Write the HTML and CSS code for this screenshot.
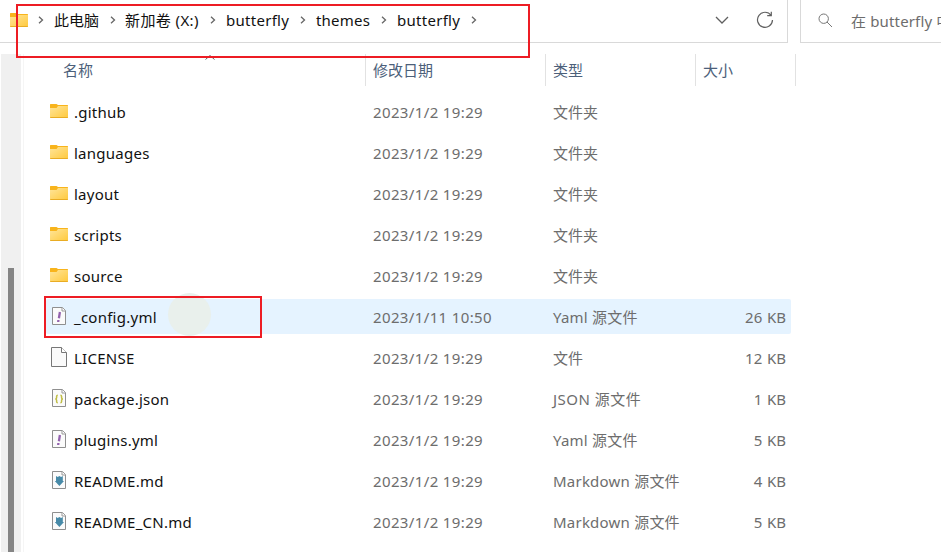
FILE: index.html
```html
<!DOCTYPE html>
<html lang="zh-CN">
<head>
<meta charset="utf-8">
<title>butterfly</title>
<link rel="stylesheet" href="styles.css">
</head>
<body>
<svg class="defs" aria-hidden="true">
  <defs>
    <linearGradient id="gold" x1="0" y1="0" x2="1" y2="1"><stop offset="0" stop-color="#ffe59a"/><stop offset="1" stop-color="#ffc93c"/></linearGradient>
    <symbol id="folder" viewBox="0 0 18 14">
      <path d="M0 .6Q0 0 .6 0H6.5L8 1H17.4Q18 1 18 1.6V6H0Z" fill="#f8b41c"/>
      <path d="M0 3.9H6.6L8 2H18V13.4Q18 14 17.4 14H.6Q0 14 0 13.4Z" fill="url(#gold)"/>
      <path d="M.3 13.5H17.7" stroke="#e9ac24"/>
    </symbol>
    <symbol id="page" viewBox="0 0 14 18">
      <path d="M.5.5H10.5L13.5 3.5V17.5H.5Z" fill="#fbfbfb" stroke="#8f8f8f"/>
      <path d="M10 .5V4H13.5" fill="#fff" stroke="#999"/>
    </symbol>
    <symbol id="yaml" viewBox="0 0 14 18">
      <use href="#page" width="14" height="18"/>
      <path d="M7.9 5L6.9 11.2M6.4 13L6.2 15" stroke="#9362ae" stroke-width="2.3"/>
    </symbol>
    <symbol id="json" viewBox="0 0 14 18">
      <use href="#page" width="14" height="18"/>
      <path d="M5.8 6.2Q4.6 6.2 4.6 7.5V8.7Q4.6 9.8 3.4 10Q4.6 10.2 4.6 11.3V12.5Q4.6 13.8 5.8 13.8M8.4 6.2Q9.6 6.2 9.6 7.5V8.7Q9.6 9.8 10.8 10Q9.6 10.2 9.6 11.3V12.5Q9.6 13.8 8.4 13.8" fill="none" stroke="#c0bd45" stroke-width="1.5"/>
    </symbol>
    <symbol id="markdown" viewBox="0 0 14 18">
      <use href="#page" width="14" height="18"/>
      <path d="M4 5L5.7 6L7.4 5L9.1 6L10.8 5V10H12L7.4 15L2.8 10H4Z" fill="#478aa8"/>
    </symbol>
    <symbol id="next" viewBox="0 0 6 8"><path d="M1 .8L4.5 4L1 7.2" fill="none" stroke="#666" stroke-width="1.3"/></symbol>
  </defs>
</svg>
<div class="explorer">
  <header class="toolbar">
    <nav class="address">
      <svg class="location"><use href="#folder"/></svg>
      <svg class="next"><use href="#next"/></svg>
      <span class="crumb computer">此电脑</span><svg class="next"><use href="#next"/></svg>
      <span class="crumb drive">新加卷 (X:)</span><svg class="next"><use href="#next"/></svg>
      <span class="crumb butterfly">butterfly</span><svg class="next"><use href="#next"/></svg>
      <span class="crumb themes">themes</span><svg class="next"><use href="#next"/></svg>
      <span class="crumb butterfly">butterfly</span><svg class="next"><use href="#next"/></svg>
      <span class="actions">
        <svg width="14" height="8" viewBox="0 0 14 8"><path d="M1 1L7 7L13 1" fill="none" stroke="#5f5f5f" stroke-width="1.3"/></svg>
        <svg width="18" height="18" viewBox="0 0 18 18"><path d="M15.1 4.4A7.5 7.5 0 1 0 16.5 9M15.3 .8V4.7H11.2" fill="none" stroke="#606060" stroke-width="1.2"/></svg>
      </span>
    </nav>
    <div class="search">
      <svg width="15" height="15" viewBox="0 0 15 15"><path d="M9 9L14 14" stroke="#777"/><circle cx="5.7" cy="5.7" r="4.7" fill="none" stroke="#777"/></svg>
      <span>在 butterfly 中</span>
    </div>
  </header>
  <div class="body">
    <aside class="scrollbar"><div class="thumb"></div></aside>
    <main class="files">
      <div class="columns">
        <span class="head name">名称<svg class="sort" viewBox="0 0 10 5"><path d="M.5 4.5L5 .5L9.5 4.5" fill="none" stroke="#666"/></svg></span>
        <span class="head date">修改日期</span>
        <span class="head type">类型</span>
        <span class="head size">大小</span>
      </div>
      <div class="row"><svg class="icon folder"><use href="#folder"/></svg><span class="filename">.github</span><span class="modified">2023/1/2 19:29</span><span>文件夹</span><span class="bytes"></span></div>
      <div class="row"><svg class="icon folder"><use href="#folder"/></svg><span class="filename">languages</span><span class="modified">2023/1/2 19:29</span><span>文件夹</span><span class="bytes"></span></div>
      <div class="row"><svg class="icon folder"><use href="#folder"/></svg><span class="filename">layout</span><span class="modified">2023/1/2 19:29</span><span>文件夹</span><span class="bytes"></span></div>
      <div class="row"><svg class="icon folder"><use href="#folder"/></svg><span class="filename">scripts</span><span class="modified">2023/1/2 19:29</span><span>文件夹</span><span class="bytes"></span></div>
      <div class="row"><svg class="icon folder"><use href="#folder"/></svg><span class="filename">source</span><span class="modified">2023/1/2 19:29</span><span>文件夹</span><span class="bytes"></span></div>
      <div class="row hover"><i class="pointer"></i><svg class="icon doc"><use href="#yaml"/></svg><span class="filename">_config.yml</span><span class="modified">2023/1/11 10:50</span><span class="kind">Yaml 源文件</span><span class="bytes">26 KB</span></div>
      <div class="row"><svg class="icon plain" viewBox="0 0 16 20"><path d="M.5.5H10.5L15.5 5.5V19.5H.5Z" fill="#fafafa" stroke="#777"/><path d="M10.5.5V5.5H15.5" fill="#fff" stroke="#777"/></svg><span class="filename">LICENSE</span><span class="modified">2023/1/2 19:29</span><span>文件</span><span class="bytes">12 KB</span></div>
      <div class="row"><svg class="icon doc"><use href="#json"/></svg><span class="filename">package.json</span><span class="modified">2023/1/2 19:29</span><span class="kind json">JSON 源文件</span><span class="bytes">1 KB</span></div>
      <div class="row"><svg class="icon doc"><use href="#yaml"/></svg><span class="filename">plugins.yml</span><span class="modified">2023/1/2 19:29</span><span class="kind">Yaml 源文件</span><span class="bytes">5 KB</span></div>
      <div class="row"><svg class="icon doc"><use href="#markdown"/></svg><span class="filename">README.md</span><span class="modified">2023/1/2 19:29</span><span class="kind">Markdown 源文件</span><span class="bytes">4 KB</span></div>
      <div class="row"><svg class="icon doc"><use href="#markdown"/></svg><span class="filename">README_CN.md</span><span class="modified">2023/1/2 19:29</span><span class="kind">Markdown 源文件</span><span class="bytes">5 KB</span></div>
    </main>
  </div>
  <div class="mark mark-path"></div>
  <div class="mark mark-file"></div>
</div>
</body>
</html>
```
FILE: styles.css
```css
* { box-sizing: border-box; }
body { margin: 0; background: #fff; }
.defs { position: absolute; width: 0; height: 0; }
.explorer {
  position: relative;
  width: 941px;
  height: 552px;
  overflow: hidden;
  font: 15px/20px "Noto Sans", "Noto Sans CJK SC", sans-serif;
  color: #6d6d6d;
  white-space: nowrap;
}
.toolbar { display: flex; gap: 12px; height: 43px; }
.address {
  display: flex;
  align-items: center;
  width: 788px;
  padding: 0 13px 2px 10px;
  border: solid #d9d9d9;
  border-width: 0 1px 1px 0;
  color: #111;
}
.location { width: 18px; height: 14px; margin-right: 10px; }
.next { flex: none; width: 6px; height: 8px; }
.crumb { margin-left: 10px; }
.computer { width: 56px; }
.drive { width: 75px; margin: 0 10px 0 9px; letter-spacing: .4px; }
.butterfly { width: 74px; letter-spacing: .28px; }
.themes { width: 65px; letter-spacing: .2px; }
.actions { display: flex; align-items: center; gap: 27px; margin-left: auto; }
.search {
  display: flex;
  align-items: center;
  gap: 18px;
  width: 141px;
  padding: 0 0 1px 17px;
  border: solid #d9d9d9;
  border-width: 0 0 1px 1px;
  letter-spacing: .15px;
  overflow: hidden;
}
.search svg { flex: none; }
.body { display: flex; height: 509px; padding: 11px 0 0 1px; }
.scrollbar { width: 20px; padding: 214px 0 0 7px; background: #f0f0f0; }
.thumb { width: 6px; height: 284px; background: #858585; }
.files { width: 773px; margin-left: 2px; border-left: 1px solid #f5f5f5; }
.columns { display: grid; grid-template-columns: 342px 180px 150px 100px; height: 32px; margin-bottom: 8px; color: #4c607a; }
.head { padding: 6px 0 0 7px; border-right: 1px solid #e2e2e2; }
.name { position: relative; padding-left: 39px; }
.sort { position: absolute; left: 181px; top: 1px; width: 10px; height: 5px; }
.row {
  position: relative;
  display: grid;
  grid-template-columns: 28px 299px 180px 150px 83px;
  align-items: center;
  width: 745px;
  height: 35px;
  margin: 0 0 6px 22px;
  padding-right: 5px;
  border-radius: 2px;
}
.row > * { position: relative; }
.hover { background: #e5f3ff; }
.filename { color: #111; letter-spacing: .25px; }
.modified { letter-spacing: .37px; }
.kind { letter-spacing: .22px; }
.json { letter-spacing: .5px; }
.bytes { text-align: right; word-spacing: .8px; }
.icon { margin-left: 4px; }
.folder { width: 18px; height: 14px; margin-bottom: 2px; }
.doc { width: 14px; height: 18px; margin: 0 0 1px 6px; }
.plain { width: 16px; height: 20px; margin: 0 0 1px 5px; }
.row > .pointer { position: absolute; left: 122px; top: -6px; width: 43px; height: 43px; border-radius: 50%; background: #e9f0ec; }
.mark { position: absolute; border: 2px solid #ed1c24; }
.mark-path { left: 16px; top: 4px; width: 514px; height: 54px; }
.mark-file { left: 44px; top: 296px; width: 218px; height: 42px; }
```
